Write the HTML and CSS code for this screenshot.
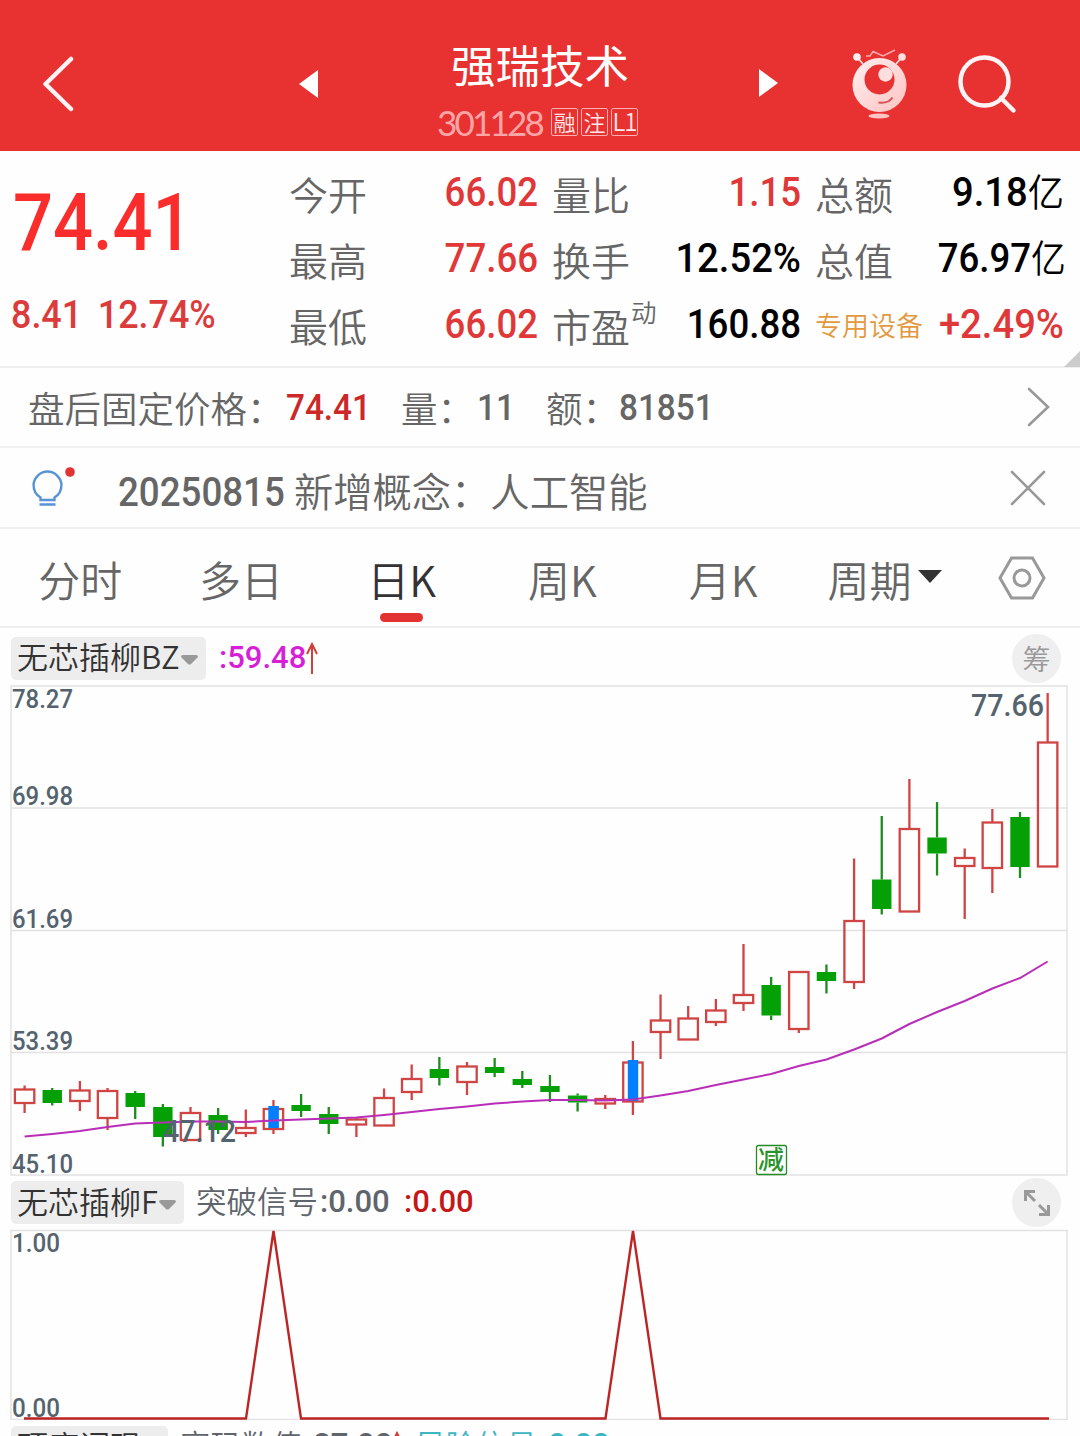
FILE: index.html
```html
<!DOCTYPE html>
<html lang="zh-CN">
<head>
    <meta charset="utf-8">
    <title>强瑞技术 301128</title>
    <meta name="viewport" content="width=device-width, initial-scale=1.0">
    <link rel="stylesheet" href="styles.css">
</head>
<body>
    <header class="header">
        <svg class="back" width="34" height="60" viewBox="0 0 34 60"><path d="M31 5L5.500 30L31 55"/></svg>
        <svg class="arrow prev" width="20" height="28" viewBox="0 0 20 28"><path d="M19 0V28L0 14Z"/></svg>
        <div class="title">
            <h1>强瑞技术</h1>
            <div class="code"><span class="code-num">301128</span><span class="tag">融</span><span class="tag">注</span><span class="tag tag-l">L1</span></div>
        </div>
        <svg class="arrow next" width="20" height="28" viewBox="0 0 20 28"><path d="M0 0V28L19 14Z"/></svg>
        <svg class="robot" width="56" height="70" viewBox="0 0 56 70">
            <defs>
                <linearGradient id="face" x1="0" y1="0" x2="1" y2="1">
                    <stop offset="0" stop-color="#fff0f0"/>
                    <stop offset="1" stop-color="#ffc2c2"/>
                </linearGradient>
            </defs>
            <path d="M5 8L11 15M50 8L44 15" stroke="#ffe4e4" stroke-width="1.6"/>
            <circle cx="5" cy="8" r="3.8" fill="#fff0f0"/>
            <circle cx="50" cy="8" r="3.8" fill="#ffe0e0"/>
            <path d="M14 7H18L21 2.500L31 7L43 1" fill="none" stroke="#ffaaaa" stroke-width="1.5"/>
            <circle cx="27.500" cy="36" r="27" fill="url(#face)"/>
            <circle cx="27.500" cy="30.500" r="15" fill="#e83131"/>
            <circle cx="33.500" cy="25.500" r="7.2" fill="#ffdede"/>
            <path d="M26.500 53.500Q36 55 40.500 48.500" fill="none" stroke="#d95555" stroke-width="2"/>
            <ellipse cx="27" cy="67" rx="10.500" ry="2.500" fill="#ffc4c4"/>
        </svg>
        <svg class="search" width="60" height="60" viewBox="0 0 60 60"><circle cx="27.500" cy="27.500" r="24"/><path d="M44 44L56.500 56.500"/></svg>
    </header>

    <section class="quote">
        <div class="price">
            <div class="last">74.41</div>
            <div class="change"><span>8.41</span><span>12.74%</span></div>
        </div>
        <div class="stats">
            <span class="label">今开</span><span class="num red">66.02</span>
            <span class="label">量比</span><span class="num red">1.15</span>
            <span class="label">总额</span><span class="num wide">9.18<i>亿</i></span>
            <span class="label">最高</span><span class="num red">77.66</span>
            <span class="label">换手</span><span class="num wide">12.52%</span>
            <span class="label">总值</span><span class="num">76.97<i>亿</i></span>
            <span class="label">最低</span><span class="num red">66.02</span>
            <span class="label">市盈<sup>动</sup></span><span class="num">160.88</span>
            <span class="label sector">专用设备</span><span class="num wide red">+2.49%</span>
        </div>
        <div class="corner"></div>
    </section>

    <section class="row after">
        <span class="after-label">盘后固定价格：</span><span class="after-num dark-red">74.41</span>
        <span class="after-label vol">量：</span><span class="after-num count">11</span>
        <span class="after-label amt">额：</span><span class="after-num">81851</span>
        <svg class="more" width="24" height="40" viewBox="0 0 24 40"><path d="M2 2L21 20L2 38"/></svg>
    </section>

    <section class="row news">
        <svg class="bulb" width="46" height="42" viewBox="0 0 46 42">
            <path d="M9.500 33V30.500C5 28 2.500 22.500 2.500 17A14.200 15 0 0 1 30.500 17C30.500 22.500 28 28 23.500 30.500V33Z M8.500 37.500H24.500"/>
            <circle cx="39" cy="5" r="4.800"/>
        </svg>
        <span class="date">20250815</span><span class="news-text">新增概念：</span><span class="news-text">人工智能</span>
        <svg class="close" width="36" height="36" viewBox="0 0 36 36"><path d="M2 2L34 34M34 2L2 34"/></svg>
    </section>

    <nav class="tabs">
        <span class="tab">分时</span>
        <span class="tab">多日</span>
        <span class="tab active">日K</span>
        <span class="tab">周K</span>
        <span class="tab">月K</span>
        <span class="tab period">周期<svg width="24" height="13" viewBox="0 0 24 13"><path d="M0 0H24L12 13Z"/></svg></span>
        <svg class="setting" width="48" height="44" viewBox="0 0 48 44"><path d="M13.500 2H34.500L46 22L34.500 42H13.500L2 22Z"/><circle cx="24" cy="22" r="8"/></svg>
    </nav>

    <div class="bar bar-main">
        <span class="chip chip-main"><span class="name">无芯插柳BZ</span><svg width="17" height="10" viewBox="0 0 17 10"><path d="M0 2Q0 0 2 0H15Q17 0 17 2L10 9Q8.500 10 7 9Z"/></svg></span>
        <span class="value purple">:59.48</span>
        <svg class="up" width="12" height="32" viewBox="0 0 12 32"><path d="M6 32V2M1 12L6 2L11 12"/></svg>
        <span class="round">筹</span>
    </div>

    <svg class="chart" id="kline" width="1080" height="491" viewBox="0 685 1080 491">
        <rect class="frame" x="11" y="686" width="1056" height="489"/>
        <path class="grid" d="M11 808H1067M11 930.500H1067M11 1052.500H1067"/>
        <g id="candles"></g>
        <polyline class="ma" id="ma"/>
        <text class="axis" x="12" y="708" textLength="61" lengthAdjust="spacingAndGlyphs">78.27</text>
        <text class="axis" x="12" y="805" textLength="61" lengthAdjust="spacingAndGlyphs">69.98</text>
        <text class="axis" x="12" y="928" textLength="61" lengthAdjust="spacingAndGlyphs">61.69</text>
        <text class="axis" x="12" y="1050" textLength="61" lengthAdjust="spacingAndGlyphs">53.39</text>
        <text class="axis" x="12" y="1173" textLength="61" lengthAdjust="spacingAndGlyphs">45.10</text>
        <text class="mark" x="971" y="716" textLength="73" lengthAdjust="spacingAndGlyphs">77.66</text>
        <text class="mark" x="163" y="1142" textLength="73" lengthAdjust="spacingAndGlyphs">47.12</text>
        <rect class="cut-box" x="756.500" y="1145.500" width="30" height="29" rx="2"/>
        <text class="cut" x="758" y="1169">减</text>
    </svg>

    <div class="bar bar-sub">
        <span class="chip chip-sub"><span class="name">无芯插柳F</span><svg width="17" height="10" viewBox="0 0 17 10"><path d="M0 2Q0 0 2 0H15Q17 0 17 2L10 9Q8.500 10 7 9Z"/></svg></span>
        <span class="signal">突破信号</span><span class="value gray">:0.00</span>
        <span class="value deep">:0.00</span>
        <span class="round">
            <svg width="26" height="26" viewBox="0 0 26 26"><path d="M11 1.500H1.500V11M2 2L11 11M15 15L24 24M15 24.500H24.500V15"/></svg>
        </span>
    </div>

    <svg class="chart" width="1080" height="191" viewBox="0 1229 1080 191">
        <rect class="frame" x="11" y="1230.500" width="1056" height="189"/>
        <text class="axis" x="12" y="1252" textLength="48" lengthAdjust="spacingAndGlyphs">1.00</text>
        <text class="axis" x="12" y="1417" textLength="48" lengthAdjust="spacingAndGlyphs">0.00</text>
        <path class="signal-line" d="M24 1418.500H246L273.500 1231L301 1418.500H605.500L633 1231L660.500 1418.500H1049"/>
    </svg>

    <div class="bar bar-last">
        <span class="chip chip-last"><span class="name">顶底词现</span></span>
        <span class="signal">密码数值</span><span class="value gray colon">:27.00</span>
        <svg class="up" width="12" height="32" viewBox="0 0 12 32"><path d="M6 32V2M1 12L6 2L11 12"/></svg>
        <span class="signal teal">风险信号</span><span class="value teal colon">:0.00</span>
    </div>

<script src="script.js"></script>
</body>
</html>
```
FILE: script.js
```js
// type, high, body top, body bottom, low
var candles = [
    ["up", 1085.5, 1089.5, 1103, 1113],
    ["down", 1088, 1090, 1103, 1105.5],
    ["up", 1081, 1090.5, 1101, 1111],
    ["up", 1088, 1091, 1118, 1130],
    ["down", 1091, 1093, 1107, 1119],
    ["down", 1104, 1107, 1137, 1146.5],
    ["up", 1107, 1113, 1140, 1140],
    ["down", 1108, 1115, 1130, 1134],
    ["up", 1109.5, 1128, 1133, 1137],
    ["up", 1100, 1109, 1129, 1134],
    ["down", 1094, 1105, 1111, 1117],
    ["down", 1107, 1114, 1124, 1134],
    ["up", 1118, 1119.5, 1124.5, 1137],
    ["up", 1088.5, 1098, 1125.5, 1125.5],
    ["up", 1064.5, 1079, 1092, 1100],
    ["down", 1057, 1069, 1078, 1085.5],
    ["up", 1062, 1066.5, 1082, 1095],
    ["down", 1058, 1067, 1073, 1077],
    ["down", 1071, 1079, 1085, 1088],
    ["down", 1075, 1086, 1092, 1102],
    ["down", 1093.5, 1095.5, 1102.5, 1111.5],
    ["up", 1095, 1099, 1103.5, 1109],
    ["up", 1041, 1062.5, 1101.5, 1115],
    ["up", 994.5, 1020.5, 1032, 1059],
    ["up", 1006, 1018.5, 1039.5, 1039.5],
    ["up", 999, 1010.5, 1022, 1026],
    ["up", 944, 995, 1003, 1011],
    ["down", 977, 985, 1015.5, 1020],
    ["up", 972, 972, 1029, 1033],
    ["down", 964.5, 972, 981, 993.5],
    ["up", 858.5, 921, 982, 989],
    ["down", 816, 879.5, 909, 914.5],
    ["up", 779, 829, 911.5, 911.5],
    ["down", 802, 837.5, 853.5, 875.5],
    ["up", 848.5, 858, 866, 919],
    ["up", 809, 822.5, 868, 893],
    ["down", 812, 817, 867, 878],
    ["up", 693, 742.5, 866.5, 866.5]
];

// average price for each day
var average = [1136.5, 1134, 1131, 1127, 1123.5, 1122.5, 1121.5, 1121.5, 1122, 1120.5,
    1119.5, 1118.5, 1117.5, 1115, 1112, 1109, 1106.5, 1103.5, 1101.5, 1100, 1100, 1100.5,
    1099.5, 1095.5, 1091, 1085, 1079.5, 1074, 1066, 1059.5, 1049.5, 1038.5, 1024, 1012,
    1001, 988.5, 978, 961.5];

var html = "";
var points = "";
for (var i = 0; i < candles.length; i++) {
    var c = candles[i];
    var x = 24.6 + i * 27.65;
    html += '<path class="' + c[0] + '" d="M' + x + ' ' + c[1] + 'V' + c[2] + 'M' + x + ' ' + c[3] + 'V' + c[4] + '"/>';
    if (c[0] == "up") {
        html += '<rect class="up" x="' + (x - 9.7) + '" y="' + c[2] + '" width="19.4" height="' + (c[3] - c[2]) + '"/>';
    } else {
        html += '<rect class="down-body" x="' + (x - 9.7) + '" y="' + c[2] + '" width="19.4" height="' + (c[3] - c[2]) + '"/>';
    }
    points += x + "," + average[i] + " ";
}
// breakout days
html += '<rect class="break" x="268.3" y="1106" width="10.6" height="22"/>';
html += '<rect class="break" x="627.8" y="1060" width="10.4" height="41"/>';

document.getElementById("candles").innerHTML = html;
document.getElementById("ma").setAttribute("points", points);
```
FILE: styles.css
```css
body {
    margin: 0;
    width: 1080px;
    height: 1436px;
    overflow: hidden;
    background: #fefefe;
    color: #666;
    font-family: "Noto Sans CJK SC", sans-serif;
    font-weight: 350;
}
svg {
    display: block;
    flex: none;
}
span {
    white-space: nowrap;
}
.header {
    height: 151px;
    background: #e83131;
    display: flex;
    box-sizing: border-box;
    padding: 16px 60px 0 40px;
    align-items: center;
    color: white;
}
.back, .search {
    fill: none;
    stroke: #fff4f4;
    stroke-width: 4.5;
    stroke-linecap: round;
    stroke-linejoin: round;
}
.arrow {
    fill: white;
}
.prev {
    margin-left: 225px;
}
.next {
    margin-top: -2px;
}
.title {
    width: 440px;
    padding-top: 18px;
    text-align: center;
}
.title h1 {
    margin: 0;
    font-size: 44.5px;
    line-height: 58px;
    font-weight: 400;
    padding-left: 2px;
}
.code {
    display: flex;
    justify-content: center;
    align-items: center;
    height: 58px;
    gap: 3px;
    margin-left: -3px;
}
.code-num {
    font-family: Lato, sans-serif;
    font-size: 35px;
    font-weight: 400;
    color: #ffa5a5;
    letter-spacing: -2.8px;
    margin-right: 6px;
}
.tag {
    width: 25px;
    height: 26px;
    border: 1px solid #ffb0b0;
    border-radius: 2px;
    font-size: 22px;
    line-height: 25px;
    text-align: center;
    color: #ffe8e8;
}
.tag-l {
    font-size: 24px;
    line-height: 24px;
    letter-spacing: -1px;
}
.robot {
    margin-left: 73px;
}
.search {
    margin-left: 49px;
}
.quote {
    height: 215px;
    border-bottom: 2px solid #efefef;
    display: flex;
    position: relative;
}
.price {
    width: 289px;
    font-family: Roboto, sans-serif;
    font-weight: 500;
}
.last {
    margin: 27px 0 0 13px;
    font-size: 80px;
    line-height: 90px;
    color: #fb2c2c;
    transform: scaleX(.88);
    transform-origin: left;
}
.change {
    margin: 27px 0 0 11px;
    display: flex;
    gap: 17px;
    font-size: 39px;
    line-height: 40px;
    color: #dc3b3b;
    transform: scaleX(.92);
    transform-origin: left;
}
.stats {
    display: grid;
    grid-template-columns: repeat(3, 111px 152px);
    grid-auto-rows: 66px;
    align-items: center;
    padding-top: 9px;
    height: 198px;
}
.label {
    font-size: 39px;
    line-height: 66px;
    width: 0;
}
.label sup {
    font-size: 25.5px;
    line-height: 0;
    vertical-align: 20px;
    margin-left: 1px;
}
.sector {
    font-size: 27px;
    color: #e3993f;
}
.num {
    font-family: Roboto, "Noto Sans CJK SC", sans-serif;
    font-weight: 500;
    font-size: 40px;
    line-height: 66px;
    text-align: right;
    color: black;
    margin-right: 14px;
    transform: scaleX(.915);
    transform-origin: right;
}
.wide {
    transform: scaleX(.955);
}
.num i {
    font-style: normal;
    font-weight: 350;
    font-size: 38px;
}
.red {
    color: #e03838;
}
.corner {
    position: absolute;
    right: 0;
    bottom: -1px;
    border-left: 16px solid transparent;
    border-bottom: 16px solid #ccc;
}
.row {
    height: 79px;
    border-bottom: 2px solid #f1f1f1;
    display: flex;
    align-items: center;
}
.after {
    height: 78px;
    padding: 0 29px 0 28px;
}
.after-label {
    font-size: 36.5px;
}
.after-num {
    font-family: Roboto, sans-serif;
    font-size: 37px;
    font-weight: 500;
    transform: scaleX(.9);
    transform-origin: left;
}
.dark-red {
    color: #cc2828;
    margin: 0 -11px 0 2px;
}
.count {
    margin: 0 -5px 0 3px;
}
.vol {
    margin-left: 32px;
}
.amt {
    margin-left: 32px;
}
.more, .close {
    margin-left: auto;
    fill: none;
    stroke: #999;
    stroke-width: 2.6;
    stroke-linecap: round;
}
.news {
    padding: 0 34px 0 31px;
}
.bulb {
    fill: none;
    stroke: #5794d6;
    stroke-width: 2.4;
}
.bulb circle {
    fill: #e03434;
    stroke: none;
}
.date {
    margin: 9px -6px 0 41px;
    font-family: Roboto, sans-serif;
    font-size: 40px;
    font-weight: 500;
    transform: scaleX(.917);
    transform-origin: left;
}
.news-text {
    font-size: 39.3px;
    margin-top: 3px;
}
.tabs {
    height: 97px;
    border-bottom: 2px solid #eee;
    display: flex;
    align-items: center;
    padding: 0 34px 0 0;
}
.tab {
    font-size: 42px;
    line-height: 96px;
    width: 160.7px;
    text-align: center;
    position: relative;
    padding-top: 3px;
}
.active {
    color: #333;
}
.active::after {
    content: "";
    position: absolute;
    left: 59px;
    bottom: 5px;
    width: 43px;
    height: 9px;
    border-radius: 5px;
    background: #e23333;
}
.period {
    display: flex;
    width: auto;
    margin-left: 24px;
    align-items: center;
    gap: 7px;
    fill: #333;
}
.period svg {
    margin-top: -5px;
}
.setting {
    margin-left: auto;
    fill: none;
    stroke: #999;
    stroke-width: 3;
}
.bar {
    height: 57px;
    display: flex;
    align-items: center;
    padding: 0 19px 0 11px;
    box-sizing: border-box;
}
.bar-main {
    padding-top: 3px;
}
.chip {
    height: 43px;
    box-sizing: border-box;
    background: #ededed;
    border-radius: 5px;
    padding-left: 6px;
    font-size: 31px;
    color: #333;
    display: flex;
    align-items: center;
    gap: 1px;
    fill: #999;
}
.chip svg {
    margin-top: 4px;
}
.name {
    line-height: 43px;
    margin-top: -5px;
}
.chip-main {
    width: 195px;
}
.chip-sub {
    width: 173px;
}
.value {
    font-family: Roboto, sans-serif;
    font-size: 32px;
    font-weight: 500;
    transform: scaleX(.97);
    transform-origin: left;
}
.purple {
    color: #d61fd6;
    margin: -3px -3px 0 13px;
}
.up {
    fill: none;
    stroke: #cf4038;
    stroke-width: 2;
}
.round {
    margin-left: auto;
    width: 49px;
    height: 49px;
    border-radius: 50%;
    background: #efefef;
    color: #999;
    font-size: 28px;
    display: flex;
    align-items: center;
    justify-content: center;
}
.round svg {
    fill: none;
    stroke: #999;
    stroke-width: 3;
}
.bar-sub {
    height: 53px;
}
.bar-sub .value {
    margin-top: -4px;
}
.signal {
    font-size: 30.5px;
    margin-left: 12px;
    margin-top: -6px;
    color: #5f656c;
}
.gray {
    color: #5f656c;
    margin-left: 2px;
}
.deep {
    color: #c41818;
    margin-left: 12px;
}
.bar-last {
    height: 54px;
}
.bar-last .value {
    margin-top: -7px;
}
.bar-last .up {
    margin: -1px 0 0 -4px;
}
.chip-last {
    width: 157px;
}
.teal {
    color: #3db5c2;
}
.colon {
    margin-left: 3px;
}
.frame, .grid {
    fill: none;
    stroke: #e2e2e2;
    stroke-width: 1.5;
}
.chart .up {
    stroke: #d04444;
    stroke-width: 2.3;
}
.down {
    stroke: #1f8c1f;
    stroke-width: 2.3;
}
.down-body {
    fill: #05a005;
}
.break {
    fill: #0080ff;
}
.ma {
    fill: none;
    stroke: #b82eb8;
    stroke-width: 2;
}
.axis, .mark {
    font-family: Roboto, sans-serif;
    font-size: 26px;
    font-weight: 500;
    fill: #54636e;
}
.mark {
    font-size: 31px;
}
.cut {
    font-size: 26px;
    font-weight: 500;
    fill: #2b932b;
}
.cut-box {
    fill: #fff;
    stroke: #228b22;
    stroke-width: 1.3;
}
.signal-line {
    fill: none;
    stroke: #bd2525;
    stroke-width: 2.4;
}
```
